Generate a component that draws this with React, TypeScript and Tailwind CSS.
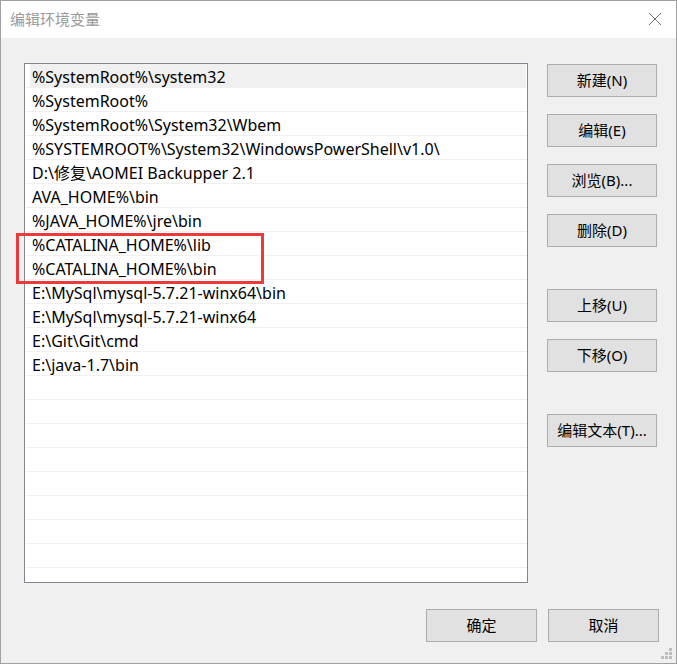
import React from "react";

const rows = [
  "%SystemRoot%\\system32",
  "%SystemRoot%",
  "%SystemRoot%\\System32\\Wbem",
  "%SYSTEMROOT%\\System32\\WindowsPowerShell\\v1.0\\",
  "D:\\修复\\AOMEI Backupper 2.1",
  "AVA_HOME%\\bin",
  "%JAVA_HOME%\\jre\\bin",
  "%CATALINA_HOME%\\lib",
  "%CATALINA_HOME%\\bin",
  "E:\\MySql\\mysql-5.7.21-winx64\\bin",
  "E:\\MySql\\mysql-5.7.21-winx64",
  "E:\\Git\\Git\\cmd",
  "E:\\java-1.7\\bin",
];

const font = { fontFamily: '"Noto Sans", "Noto Sans CJK SC", sans-serif' };

const Btn = ({ children, className = "" }: { children: React.ReactNode; className?: string }) => (
  <button
    className={`h-[33px] border border-[#adadad] bg-[#e1e1e1] text-[15px] leading-none text-black flex items-center justify-center ${className}`}
  >
    {children}
  </button>
);

export default function App() {
  const all = [...rows, ...Array(22 - rows.length).fill("")];
  return (
    <div
      className="relative w-[677px] h-[664px] bg-[#f0f0f0] border border-[#a0a0a0] flex flex-col overflow-hidden"
      style={font}
    >
      {/* title bar */}
      <div className="h-[37px] bg-white flex items-center justify-between pl-[9px] pr-[14px] shrink-0">
        <span className="text-[15px] text-[#9a9a9a]">编辑环境变量</span>
        <svg width="14" height="14" viewBox="0 0 14 14" className="mb-[1px]">
          <path d="M1 1L13 13M13 1L1 13" stroke="#707070" strokeWidth="1" />
        </svg>
      </div>

      <div className="flex pl-[23px] pt-[25px]">
        {/* list */}
        <div className="w-[504px] h-[520px] border border-[#828790] bg-white overflow-hidden">
          {all.map((r, i) =>
            i === 0 ? (
              <div key={i} className="h-[24px] border-b border-[#f0f0f0] pl-[5px] pr-[1px]">
                <div className="h-full bg-[#f0f0f0] pl-[2px] pt-[2px] flex items-center text-[16px] text-black whitespace-nowrap">
                  {r}
                </div>
              </div>
            ) : (
              <div
                key={i}
                className="h-[24px] border-b border-[#f0f0f0] ml-[1px] pl-[6px] pt-[2px] flex items-center text-[16px] text-black whitespace-nowrap"
              >
                {r}
              </div>
            )
          )}
        </div>

        {/* buttons */}
        <div className="ml-[19px] flex flex-col pt-[1px]">
          <Btn className="w-[110px]">新建(N)</Btn>
          <Btn className="w-[110px] mt-[17px]">编辑(E)</Btn>
          <Btn className="w-[110px] mt-[17px]">浏览(B)...</Btn>
          <Btn className="w-[110px] mt-[17px]">删除(D)</Btn>
          <Btn className="w-[110px] mt-[42px]">上移(U)</Btn>
          <Btn className="w-[110px] mt-[17px]">下移(O)</Btn>
          <Btn className="w-[110px] mt-[42px]">编辑文本(T)...</Btn>
        </div>
      </div>

      {/* bottom buttons */}
      <div className="flex justify-end gap-[11px] pr-[17px] mt-[26px]">
        <Btn className="w-[111px]">确定</Btn>
        <Btn className="w-[111px]">取消</Btn>
      </div>

      {/* size grip */}
      <svg width="12" height="12" viewBox="0 0 12 12" className="absolute right-[3px] bottom-[3px]">
        {[
          [8, 0],
          [4, 4],
          [8, 4],
          [0, 8],
          [4, 8],
          [8, 8],
        ].map(([x, y], i) => (
          <rect key={i} x={x} y={y} width="3" height="3" fill="#bdbdbd" />
        ))}
      </svg>

      {/* red highlight annotation */}
      <div className="absolute left-[15px] top-[232px] w-[248px] h-[51px] border-[3px] border-[#ec3a3a]" />
    </div>
  );
}
